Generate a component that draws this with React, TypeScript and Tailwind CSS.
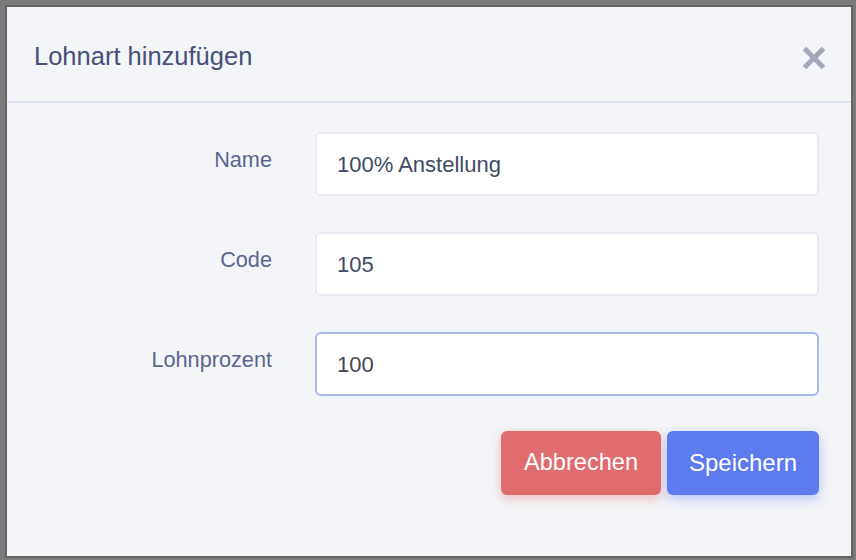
import React from "react";

function CloseIcon() {
  return (
    <svg width="24" height="24" viewBox="0 0 24 24" aria-hidden="true">
      <path d="M2.5 2.5 L21.5 21.5 M21.5 2.5 L2.5 21.5" stroke="#a3a7ba" strokeWidth="5" strokeLinecap="butt" fill="none" />
    </svg>
  );
}

function Row({ label, value, focused, valueColor }: { label: string; value: string; focused?: boolean; valueColor: string }) {
  return (
    <div className="flex items-start">
      <div className="w-[265px] shrink-0 pt-3 text-right text-[21.7px] leading-8 text-[#5b6590]">{label}</div>
      <div className="ml-[43px] flex-1">
        <div
          className={
            focused
              ? "flex h-16 items-center rounded-md border-2 border-[#a9b8f2] bg-white pl-5 text-[22px]"
              : "flex h-16 items-center rounded-md border-2 border-[#e8ebf1] bg-white pl-5 text-[22px]"
          }
          style={{ color: valueColor }}
        >
          {value}
        </div>
      </div>
    </div>
  );
}

export default function App() {
  return (
    <div
      className="h-[560px] w-[856px] overflow-hidden bg-[#7b7b7b] pl-[7px] pt-[7px]"
      style={{ fontFamily: '"Liberation Sans", Arial, Helvetica, sans-serif' }}
    >
      <div className="flex h-[549px] w-[844px] flex-col bg-[#f4f5f8] shadow-[0_0_0_2px_#646464]">
        <div className="flex h-[96px] shrink-0 items-center justify-between border-b-2 border-[#dee3ef] pl-[27px] pr-[25px]">
          <div className="pt-[4px] text-[25.5px] text-[#465178]">Lohnart hinzufügen</div>
          <div className="pt-[8px]">
            <CloseIcon />
          </div>
        </div>
        <div className="flex flex-col pr-[32px] pt-[29px]">
          <div className="flex flex-col gap-9">
            <Row label="Name" value="100% Anstellung" valueColor="#3e4a66" />
            <Row label="Code" value="105" valueColor="#3e4a66" />
            <Row label="Lohnprozent" value="100" focused valueColor="#43484f" />
          </div>
          <div className="mt-[35px] flex justify-end gap-[6px]">
            <button className="h-16 w-[160px] rounded-md bg-[#e06c6e] text-[23.6px] text-white shadow-[0_4px_12px_rgba(224,108,110,0.4)]">
              Abbrechen
            </button>
            <button className="h-16 w-[152px] rounded-md bg-[#5b7bef] text-[24px] text-white shadow-[0_4px_12px_rgba(91,123,239,0.4)]">
              Speichern
            </button>
          </div>
        </div>
      </div>
    </div>
  );
}
